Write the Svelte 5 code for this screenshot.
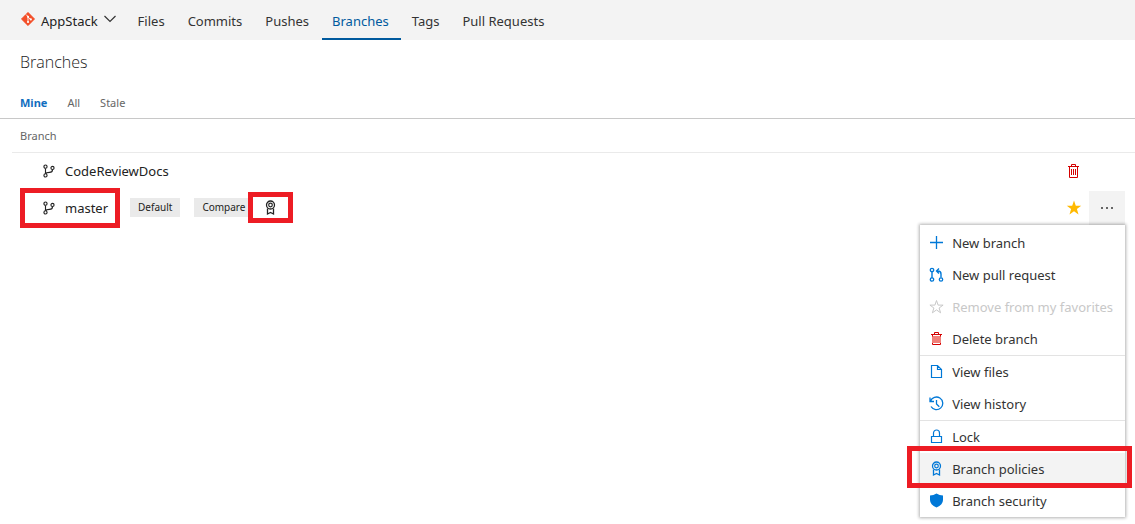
<script>
  const links = ['Files', 'Commits', 'Pushes', 'Branches', 'Tags', 'Pull Requests'];
  const groups = [
    [
      { icon: 'plus', label: 'New branch' },
      { icon: 'pull', label: 'New pull request' },
      { icon: 'star', label: 'Remove from my favorites', disabled: true },
      { icon: 'trash', label: 'Delete branch' }
    ],
    [
      { icon: 'file', label: 'View files' },
      { icon: 'history', label: 'View history' }
    ],
    [
      { icon: 'lock', label: 'Lock' },
      { icon: 'ribbon', label: 'Branch policies', marked: true },
      { icon: 'shield', label: 'Branch security' }
    ]
  ];
</script>

{#snippet icon(name)}
  <svg class="icon {name}" viewBox="0 0 16 16" width="16" height="16" fill="none" stroke="currentColor" aria-hidden="true">
    {#if name === 'plus'}
      <path d="M7.5 1v13M1 7.5h13" stroke-width="1.3" />
    {:else if name === 'pull'}
      <circle cx="3" cy="3" r="1.7" stroke-width="1.3" /><circle cx="3" cy="12.5" r="1.7" stroke-width="1.3" /><circle cx="12" cy="12.5" r="1.7" stroke-width="1.3" />
      <path d="M3 5v6M12 10.5V7q0-3-3-3H7.5M10 1.5L7.5 4L10 6.5" stroke-width="1.4" />
    {:else if name === 'star'}
      <path d="M7.5 1.5l1.6 4.6h5l-4 2.9 1.5 4.8-4.1-2.9-4.1 2.9L4.9 9l-4-2.9h5z" />
    {:else if name === 'trash'}
      <path class="can" d="M3 5h9v7H3z" />
      <path d="M2 3.5h11M5.5 3V1.5h4V3M3.5 3.5v2M11.5 3.5v2M3.5 12v1.5h8V12" />
    {:else if name === 'bin'}
      <path d="M2 3.5h11M5.5 3V1.5h4V3M3.5 3.5v11h8v-11M5.5 6v6M7.5 6v6M9.5 6v6" />
    {:else if name === 'file'}
      <path d="M2.5 1.5h6l4 4v8h-10zM8.5 1.5v4h4" stroke-width="1.2" />
    {:else if name === 'history'}
      <path d="M1 1.5v4h4M1.5 5.2A6.3 6.3 0 1 1 2 10.5M7.5 4v4l2.8 2.8" stroke-width="1.3" />
    {:else if name === 'lock'}
      <path d="M2.5 7.5h10v6h-10zM4.5 7.5V4a3 3 0 0 1 6 0v3.5" stroke-width="1.2" />
    {:else if name === 'ribbon'}
      <circle cx="7.5" cy="5" r="4" stroke-width="1.3" /><circle cx="7.5" cy="5" r="1.8" stroke-width="1.2" />
      <path d="M4.5 8.5v5.5l3-1.5 3 1.5V8.5" stroke-width="1.3" />
    {:else if name === 'shield'}
      <path d="M7.5 .5q3 2 6.5 2V7q0 4.5-6.5 7.5Q1 11.5 1 7V2.500Q4.500 2.500 7.500 .5z" fill="currentColor" stroke="none" />
    {:else if name === 'favorite'}
      <path d="M8 .5l1.8 5.300h5.400l-4.300 3.300 1.600 5.400L8 11.200l-4.500 3.300 1.600-5.400L.8 5.800h5.400z" fill="currentColor" stroke="none" />
    {:else if name === 'branch'}
      <circle cx="4" cy="3" r="1.8" stroke-width="1.3" /><circle cx="4" cy="13" r="1.8" stroke-width="1.3" /><circle cx="12" cy="4.5" r="1.8" stroke-width="1.3" />
      <path d="M4 5v6M12 6.5q0 3-3.5 3-3.7 0-4.3 1.8" stroke-width="1.3" />
    {/if}
  </svg>
{/snippet}

<header>
  <button class="repo">
    <svg width="14" height="14" viewBox="0 0 14 14" aria-hidden="true">
      <path d="M7 .3L13.7 7 7 13.7.3 7z" fill="#f34f29" stroke="#f34f29" stroke-width=".6" stroke-linejoin="round" />
      <path d="M5 2.5l2 2v5.5M7 5l2.7 2.5" stroke="#fff" stroke-width=".9" fill="none" />
      <circle cx="7" cy="4.7" r="1" fill="#fff" /><circle cx="7" cy="10" r="1.1" fill="#fff" /><circle cx="9.8" cy="7.4" r="1.1" fill="#fff" />
    </svg>
    <span>AppStack</span>
    <svg width="12" height="8" viewBox="0 0 12 8" aria-hidden="true"><path d="M.5 1L6 6.5 11.5 1" fill="none" stroke="#333" stroke-width="1.2" /></svg>
  </button>
  <nav>
    {#each links as link}
      <a href="#{link}" class:current={link === 'Branches'}>{link}</a>
    {/each}
  </nav>
</header>

<main>
  <h1>Branches</h1>
  <div class="tabs">
    <button class="selected">Mine</button>
    <button>All</button>
    <button>Stale</button>
  </div>
  <section>
    <h2>Branch</h2>
    <div class="row">
      <span class="name">{@render icon('branch')}<a href="#docs">CodeReviewDocs</a></span>
      <button class="tool delete" aria-label="Delete branch">{@render icon('bin')}</button>
    </div>
    <div class="row">
      <span class="name marked">{@render icon('branch')}<a href="#master">master</a></span>
      <span class="badge">Default</span>
      <span class="badge">Compare</span>
      <span class="policy marked">{@render icon('ribbon')}</span>
      <button class="tool pin" aria-label="Favorite">{@render icon('favorite')}</button>
      <div class="more">
        <button class="dots" aria-label="More actions">
          <svg width="14" height="2" viewBox="0 0 14 2" aria-hidden="true"><path d="M1 0h2v2H1zM6 0h2v2H6zM11 0h2v2h-2z" fill="#666" /></svg>
        </button>
        <div class="menu">
          {#each groups as group}
            <div class="group">
              {#each group as item}
                <button class="item" class:marked={item.marked} disabled={item.disabled}>
                  {@render icon(item.icon)}<span>{item.label}</span>
                </button>
              {/each}
            </div>
          {/each}
        </div>
      </div>
    </div>
  </section>
</main>

<style>
  :global(body) {
    margin: 0;
    background: #fff;
    color: #222;
    font-family: "Noto Sans", "Open Sans", sans-serif;
    font-size: 13px;
    line-height: 20px;
  }
  button {
    border: 0;
    padding: 0;
    background: none;
    color: inherit;
    font: inherit;
    text-align: left;
  }
  a { color: inherit; text-decoration: none; }
  svg { display: block; flex: none; }
  header {
    display: flex;
    height: 40px;
    background: #f3f3f3;
  }
  .repo {
    display: flex;
    align-items: center;
    gap: 6px;
    padding: 2px 12px 0 21px;
  }
  .repo svg { margin-bottom: 4px; }
  nav { display: flex; gap: 1px; color: #333; }
  nav a {
    box-sizing: border-box;
    height: 40px;
    padding: 11px 12px 0 10px;
  }
  nav .current { color: #005a9e; border-bottom: 2px solid #005a9e; }
  main { min-height: calc(100vh - 40px); }
  h1 {
    margin: 0;
    padding: 10px 20px 0;
    font-family: "Open Sans", sans-serif;
    font-size: 16px;
    font-weight: 300;
    line-height: 24px;
    color: #222;
  }
  .tabs {
    display: flex;
    gap: 20px;
    padding: 19px 20px 5px;
    border-bottom: 1px solid #c8c8c8;
    font-size: 11px;
    color: #666;
  }
  .tabs .selected { color: #106ebe; font-weight: 700; }
  section { padding-left: 12px; }
  h2 {
    margin: 0;
    padding: 7px 8px 6px;
    border-bottom: 1px solid #eaeaea;
    font-size: 11px;
    font-weight: 400;
    color: #666;
  }
  .row {
    box-sizing: border-box;
    display: flex;
    align-items: center;
    height: 37px;
    padding: 0 10px 2px 8px;
  }
  .name {
    box-sizing: border-box;
    display: flex;
    align-items: center;
    gap: 9px;
    min-width: 100px;
    height: 40px;
    padding-left: 22px;
    border: 0 solid transparent;
  }
  .name a { padding-top: 1px; }
  .name .icon { width: 14px; height: 14px; }
  .name.marked { padding-left: 17px; border: 5px solid #ed1c24; }
  .badge {
    margin-left: 10px;
    padding: 0 8px;
    background: #eaeaea;
    font-size: 10px;
    line-height: 19px;
  }
  .badge + .badge { margin-left: 14px; }
  .policy.marked {
    position: relative;
    margin-left: -5px;
    padding: 3px 9px 2px 10px;
    border: 5px solid #ed1c24;
    background: #fff;
  }
  .tool { margin-left: auto; }
  .delete { margin-right: 43px; color: #d40000; }
  .can { fill: #f0807a; stroke: none; }
  .pin { margin-right: 7px; color: #ffb900; }
  .more { position: relative; }
  .dots {
    display: flex;
    align-items: center;
    justify-content: center;
    width: 36px;
    height: 34px;
    background: #f3f3f3;
  }
  .menu {
    position: absolute;
    top: 34px;
    right: 0;
    padding-top: 2px;
    background: #fff;
    box-shadow: 0 0 3px 1px rgba(0, 0, 0, 0.3);
  }
  .group + .group { border-top: 1px solid #e3e3e3; }
  .item {
    display: flex;
    align-items: center;
    gap: 7px;
    width: 100%;
    height: 32px;
    padding: 0 12px 0 9px;
    white-space: nowrap;
    color: #333;
  }
  .item .icon { color: #0078d7; }
  .item .trash { color: #d40000; }
  .item:disabled, .item:disabled .icon { color: #c8c8c8; }
  .item.marked {
    position: relative;
    background: #f3f3f3;
  }
  .item.marked::after {
    content: "";
    position: absolute;
    inset: -7px -7px -3px -13px;
    border: 5px solid #ed1c24;
  }
</style>
